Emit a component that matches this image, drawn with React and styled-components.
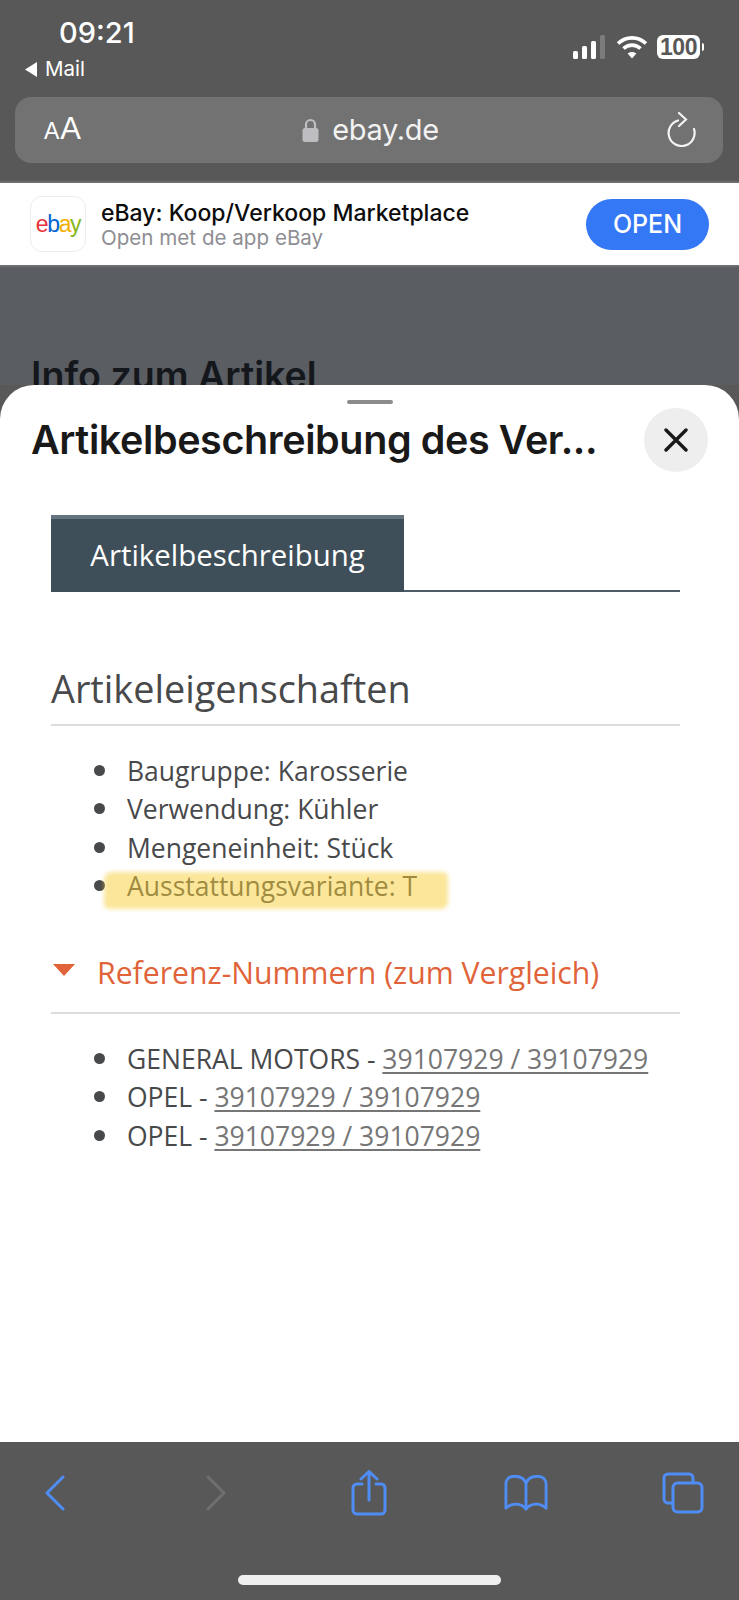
import React from "react";
import styled, { createGlobalStyle } from "styled-components";

const Global = createGlobalStyle`
  html, body { margin: 0; padding: 0; background: #585858; }
  * { box-sizing: border-box; }
`;

const Screen = styled.div`
  width: 739px;
  height: 1600px;
  display: flex;
  flex-direction: column;
  overflow: hidden;
  font-family: "Open Sans", sans-serif;
`;

const Chrome = styled.header`
  height: 183px;
  background: #585858;
  padding: 16px 15px 0 15px;
  color: #fff;
  border-bottom: 2px solid #6d6d6d;
`;

const StatusRow = styled.div`
  height: 81px;
  display: flex;
  justify-content: space-between;
`;

const StatusLeft = styled.div`
  display: flex;
  flex-direction: column;
  font-family: Inter, sans-serif;
`;

const Time = styled.div`
  margin-left: 44px;
  font-size: 29px;
  line-height: 34px;
  font-weight: 500;
`;

const BackApp = styled.div`
  margin: 7px 0 0 9px;
  display: flex;
  align-items: center;
  gap: 7px;
  font-size: 20.5px;
  line-height: 24px;
  font-weight: 400;
`;

const StatusRight = styled.div`
  display: flex;
  align-items: flex-start;
  padding: 19px 24px 0 0;
`;

const WifiSlot = styled.div`
  margin: 0 9px 0 11px;
`;

const Battery = styled.div`
  width: 43px;
  height: 24px;
  border-radius: 6px;
  background: #fff;
  color: #585858;
  font: 700 23px/24px "Liberation Sans", sans-serif;
  letter-spacing: -0.5px;
  text-align: center;
  position: relative;
  &::after {
    content: "";
    position: absolute;
    right: -4px;
    top: 8px;
    width: 2px;
    height: 8px;
    border-radius: 0 2px 2px 0;
    background: #fff;
  }
`;

const UrlBar = styled.div`
  height: 66px;
  width: 708px;
  background: #727272;
  border-radius: 16px;
  display: grid;
  grid-template-columns: 120px 1fr 120px;
  align-items: center;
  padding: 0 26px 0 29px;
`;

const TextSize = styled.div`
  font: 400 31px/36px "Liberation Sans", Inter, sans-serif;
  & small { font-size: 23px; margin-right: 1px; }
`;

const Domain = styled.div`
  display: flex;
  justify-content: center;
  align-items: center;
  gap: 13px;
  font: 400 29px/36px Inter, sans-serif;
  letter-spacing: -0.3px;
  color: #f2f2f2;
`;

const Reload = styled.div`
  display: flex;
  justify-content: flex-end;
`;

const AppBanner = styled.section`
  height: 84px;
  background: #fff;
  border-bottom: 2px solid #6c6e72;
  display: flex;
  align-items: center;
  padding: 0 30px 0 30px;
`;

const AppIcon = styled.div`
  width: 56px;
  height: 56px;
  border: 1px solid #ececec;
  border-radius: 12px;
  display: flex;
  align-items: center;
  justify-content: center;
  font: 400 23px/1 "Liberation Sans", sans-serif;
  letter-spacing: -1.4px;
  flex-shrink: 0;
`;

const LogoLetter = styled.span`
  color: ${(p) => p.$c};
`;

const AppText = styled.div`
  margin-left: 15px;
  flex: 1;
  font-family: Inter, sans-serif;
  padding-top: 1px;
`;

const AppName = styled.div`
  font-size: 23px;
  line-height: 26px;
  font-weight: 500;
  color: #0c0c0c;
`;

const AppSub = styled.div`
  font-size: 20.6px;
  line-height: 24px;
  color: #8e8e93;
`;

const OpenButton = styled.div`
  width: 123px;
  height: 51px;
  border-radius: 26px;
  background: #3478f6;
  color: #fff;
  font: 500 25px/51px Inter, sans-serif;
  text-align: center;
`;

const DimPage = styled.div`
  height: 118px;
  background: #5a5d62;
  overflow: hidden;
  padding: 87px 0 0 31px;
  font: 600 37.6px/44px Inter, sans-serif;
  color: #14171c;
`;

const Sheet = styled.main`
  flex: 1;
  background: #fff;
  border-radius: 34px 34px 0 0;
  position: relative;
  padding: 15px 0 0 0;
  display: flex;
  flex-direction: column;
`;

const Handle = styled.div`
  width: 46px;
  height: 4px;
  border-radius: 2px;
  background: #8c8c8c;
  align-self: center;
  margin-left: 1px;
`;

const SheetHeader = styled.div`
  display: flex;
  align-items: center;
  justify-content: space-between;
  padding: 4px 31px 0 31px;
  height: 68px;
`;

const SheetTitle = styled.h1`
  margin: 0;
  font: 600 39.5px/48px Inter, sans-serif;
  letter-spacing: -0.4px;
  color: #191919;
  white-space: nowrap;
`;

const CloseButton = styled.div`
  width: 64px;
  height: 64px;
  border-radius: 50%;
  background: #eeeeee;
  display: flex;
  align-items: center;
  justify-content: center;
`;

const Body = styled.div`
  padding: 43px 59px 0 51px;
`;

const Tabs = styled.div`
  height: 77px;
  border-bottom: 2px solid #4c5c68;
  display: flex;
`;

const Tab = styled.div`
  width: 353px;
  height: 77px;
  background: #3f4f5a;
  border-top: 4px solid #64737d;
  color: #fff;
  font: 500 29.4px/73px "Open Sans", sans-serif;
  text-align: center;
`;

const SectionTitle = styled.h2`
  margin: 71px 0 0;
  padding-bottom: 10px;
  font: 400 37.8px/51px "Open Sans", sans-serif;
  color: #48494b;
  border-bottom: 2px solid #dddddd;
`;

const Items = styled.ul`
  list-style: none;
  margin: 26px 0 0;
  padding: 0 0 0 76px;
`;

const Item = styled.li`
  position: relative;
  font: 400 26.5px/38.3px "Open Sans", sans-serif;
  color: #48494b;
  white-space: nowrap;
  &::before {
    content: "";
    position: absolute;
    left: -33px;
    top: 13px;
    width: 11px;
    height: 11px;
    border-radius: 50%;
    background: #48494b;
  }
`;

const Highlight = styled.span`
  position: absolute;
  left: -23px;
  top: 5px;
  width: 344px;
  height: 37px;
  border-radius: 8px 5px 7px 5px;
  background: rgba(247, 205, 53, 0.5);
  filter: blur(2px);
`;

const RefLink = styled.a`
  color: #767676;
  text-decoration: underline;
  text-underline-offset: 3px;
  text-decoration-thickness: 1.5px;
`;

const RefHeading = styled.h2`
  margin: 47px 0 0;
  padding: 0 0 19px 2px;
  display: flex;
  align-items: center;
  gap: 22px;
  font: 400 30.2px/41px "Open Sans", sans-serif;
  color: #e0633a;
  border-bottom: 2px solid #dddddd;
`;

const Caret = styled.span`
  width: 0;
  height: 0;
  border-left: 11px solid transparent;
  border-right: 11px solid transparent;
  border-top: 12px solid #e0633a;
  margin-top: -6px;
`;

const Toolbar = styled.nav`
  height: 158px;
  background: #585858;
  padding: 28px 34px 0 33px;
  display: flex;
  flex-direction: column;
`;

const ToolIcons = styled.div`
  display: flex;
  justify-content: space-between;
  height: 105px;
`;

const ToolSlot = styled.div`
  width: 44px;
  height: 46px;
  display: flex;
  align-items: center;
  justify-content: center;
`;

const HomeBar = styled.div`
  width: 263px;
  height: 10px;
  border-radius: 5px;
  background: #efefef;
  align-self: center;
`;

const blue = "#4f8df5";

const BackArrow = () => (
  <svg width="14" height="17" viewBox="0 0 14 17"><path d="M13 1 L1 8.5 L13 16 Z" fill="#fff" /></svg>
);

const Signal = () => (
  <svg width="32" height="24" viewBox="0 0 32 24">
    <rect x="0" y="16" width="5" height="8" rx="1.5" fill="#fff" />
    <rect x="9" y="11" width="5" height="13" rx="1.5" fill="#fff" />
    <rect x="18" y="6" width="5" height="18" rx="1.5" fill="#fff" />
    <rect x="27" y="0" width="5" height="24" rx="1.5" fill="#7c7c7c" />
  </svg>
);

const Wifi = () => (
  <svg width="32" height="24" viewBox="0 0 32 24" fill="none" stroke="#fff" strokeWidth="3.6">
    <path d="M2 8.5 C10 1 22 1 30 8.5" />
    <path d="M7.5 13.5 C12.5 9 19.5 9 24.5 13.5" />
    <path d="M16 23.5 L11.6 18.6 C14 16.4 18 16.4 20.4 18.6 Z" fill="#fff" stroke="none" />
  </svg>
);

const Lock = () => (
  <svg width="17" height="24" viewBox="0 0 17 24">
    <path d="M4 11 V6.5 a4.5 4.5 0 0 1 9 0 V11" fill="none" stroke="#bdbdc2" strokeWidth="2.2" />
    <rect x="0.5" y="10" width="16" height="14" rx="2.5" fill="#bdbdc2" />
  </svg>
);

const ReloadIcon = () => (
  <svg width="30" height="36" viewBox="0 0 30 36" fill="none" stroke="#f4f4f4" strokeWidth="2.2" strokeLinecap="round">
    <path d="M11 8.5 A13 13 0 1 0 27 17" />
    <path d="M12 1 L19 7.5 L12 14" />
  </svg>
);

const CloseIcon = () => (
  <svg width="24" height="24" viewBox="0 0 24 24" stroke="#191919" strokeWidth="3.4" strokeLinecap="round">
    <path d="M2 2 L22 22 M22 2 L2 22" />
  </svg>
);

const Prev = () => (
  <svg width="22" height="36" viewBox="0 0 22 36" fill="none" stroke={blue} strokeWidth="3" strokeLinecap="round" strokeLinejoin="round">
    <path d="M19 2 L3 18 L19 34" />
  </svg>
);

const Next = () => (
  <svg width="30" height="36" viewBox="0 0 30 36" fill="none" stroke="#6f6f6f" strokeWidth="3" strokeLinecap="round" strokeLinejoin="round">
    <path d="M11 2 L27 18 L11 34" />
  </svg>
);

const Share = () => (
  <svg width="36" height="46" viewBox="0 0 36 46" fill="none" stroke={blue} strokeWidth="3" strokeLinecap="round" strokeLinejoin="round">
    <path d="M11 14 H6 a4 4 0 0 0 -4 4 V40 a4 4 0 0 0 4 4 H30 a4 4 0 0 0 4 -4 V18 a4 4 0 0 0 -4 -4 H25" />
    <path d="M18 30 V2" />
    <path d="M10 9 L18 1.5 L26 9" />
  </svg>
);

const Book = () => (
  <svg width="46" height="38" viewBox="0 0 46 38" fill="none" stroke={blue} strokeWidth="3" strokeLinecap="round" strokeLinejoin="round">
    <path d="M23 36 V9 C21 3 16 1.5 11 1.5 C5 1.5 2 5 2 10 V35 C8 29 18 29 23 36 C28 29 38 29 44 35 V10 C44 5 41 1.5 35 1.5 C30 1.5 25 3 23 9" />
  </svg>
);

const TabsIcon = () => (
  <svg width="42" height="42" viewBox="0 0 42 42" fill="none" stroke={blue} strokeWidth="3" strokeLinejoin="round">
    <path d="M10 31 H6 a4 4 0 0 1 -4 -4 V6 a4 4 0 0 1 4 -4 H27 a4 4 0 0 1 4 4 V10" />
    <rect x="11" y="11" width="29" height="29" rx="4.5" />
  </svg>
);

export default function App() {
  return (
    <Screen>
      <Global />
      <Chrome>
        <StatusRow>
          <StatusLeft>
            <Time>09:21</Time>
            <BackApp>
              <BackArrow />
              Mail
            </BackApp>
          </StatusLeft>
          <StatusRight>
            <Signal />
            <WifiSlot><Wifi /></WifiSlot>
            <Battery>100</Battery>
          </StatusRight>
        </StatusRow>
        <UrlBar>
          <TextSize><small>A</small>A</TextSize>
          <Domain>
            <Lock />
            ebay.de
          </Domain>
          <Reload><ReloadIcon /></Reload>
        </UrlBar>
      </Chrome>
      <AppBanner>
        <AppIcon>
          <LogoLetter $c="#e53238">e</LogoLetter>
          <LogoLetter $c="#0064d2">b</LogoLetter>
          <LogoLetter $c="#f5af02">a</LogoLetter>
          <LogoLetter $c="#86b817">y</LogoLetter>
        </AppIcon>
        <AppText>
          <AppName>eBay: Koop/Verkoop Marketplace</AppName>
          <AppSub>Open met de app eBay</AppSub>
        </AppText>
        <OpenButton>OPEN</OpenButton>
      </AppBanner>
      <DimPage>Info zum Artikel</DimPage>
      <Sheet>
        <Handle />
        <SheetHeader>
          <SheetTitle>Artikelbeschreibung des Ver...</SheetTitle>
          <CloseButton><CloseIcon /></CloseButton>
        </SheetHeader>
        <Body>
          <Tabs>
            <Tab>Artikelbeschreibung</Tab>
          </Tabs>
          <SectionTitle>Artikeleigenschaften</SectionTitle>
          <Items>
            <Item>Baugruppe: Karosserie</Item>
            <Item>Verwendung: Kühler</Item>
            <Item>Mengeneinheit: Stück</Item>
            <Item>
              Ausstattungsvariante: T
              <Highlight />
            </Item>
          </Items>
          <RefHeading>
            <Caret />
            Referenz-Nummern (zum Vergleich)
          </RefHeading>
          <Items>
            <Item>GENERAL MOTORS - <RefLink>39107929 / 39107929</RefLink></Item>
            <Item>OPEL - <RefLink>39107929 / 39107929</RefLink></Item>
            <Item>OPEL - <RefLink>39107929 / 39107929</RefLink></Item>
          </Items>
        </Body>
      </Sheet>
      <Toolbar>
        <ToolIcons>
          <ToolSlot><Prev /></ToolSlot>
          <ToolSlot><Next /></ToolSlot>
          <ToolSlot><Share /></ToolSlot>
          <ToolSlot><Book /></ToolSlot>
          <ToolSlot><TabsIcon /></ToolSlot>
        </ToolIcons>
        <HomeBar />
      </Toolbar>
    </Screen>
  );
}
